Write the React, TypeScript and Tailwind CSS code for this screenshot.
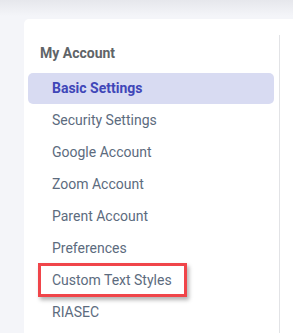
import React from "react";

const items = [
  "Security Settings",
  "Google Account",
  "Zoom Account",
  "Parent Account",
  "Preferences",
];

export default function App() {
  return (
    <div
      className="relative w-[293px] h-[333px] overflow-hidden bg-[#f4f5f9]"
      style={{ fontFamily: "Roboto, 'Liberation Sans', sans-serif" }}
    >
      <div className="absolute left-0 right-0 top-0 h-[16px] bg-gradient-to-b from-[#e6e7ec] to-[#f4f5f9]" />
      <div className="relative ml-[24px] mt-[19px] h-[320px] bg-white rounded-tl-[5px] flex">
        <div className="w-[250px] mr-[5px] pt-[24px] pl-[4px]">
          <div className="pl-[12px] h-[20px] mb-[10px] text-[14px] font-bold text-[#606468] leading-[20px]">
            My Account
          </div>
          <div className="h-[31px] rounded-[5px] bg-[#d8dbf2] pl-[24px] flex items-center text-[14px] font-bold text-[#3f46b8]">
            Basic Settings
          </div>
          {items.map((t) => (
            <div key={t} className="h-[32px] pl-[24px] flex items-center text-[14px] text-[#5c6b7e]">
              {t}
            </div>
          ))}
          <div className="h-[32px] pl-[24px] flex items-center text-[14px] text-[#5c6b7e] relative">
            <div className="absolute left-[10px] top-[-1px] w-[149px] h-[34px] border-[3px] border-[#f0454a] shadow-[2px_3px_4px_rgba(0,0,0,0.3)]" />
            Custom Text Styles
          </div>
          <div className="h-[32px] pl-[24px] flex items-center text-[14px] text-[#5c6b7e]">
            RIASEC
          </div>
        </div>
        <div className="w-px bg-[#e2e3e6] mt-[16px]" />
      </div>
    </div>
  );
}
